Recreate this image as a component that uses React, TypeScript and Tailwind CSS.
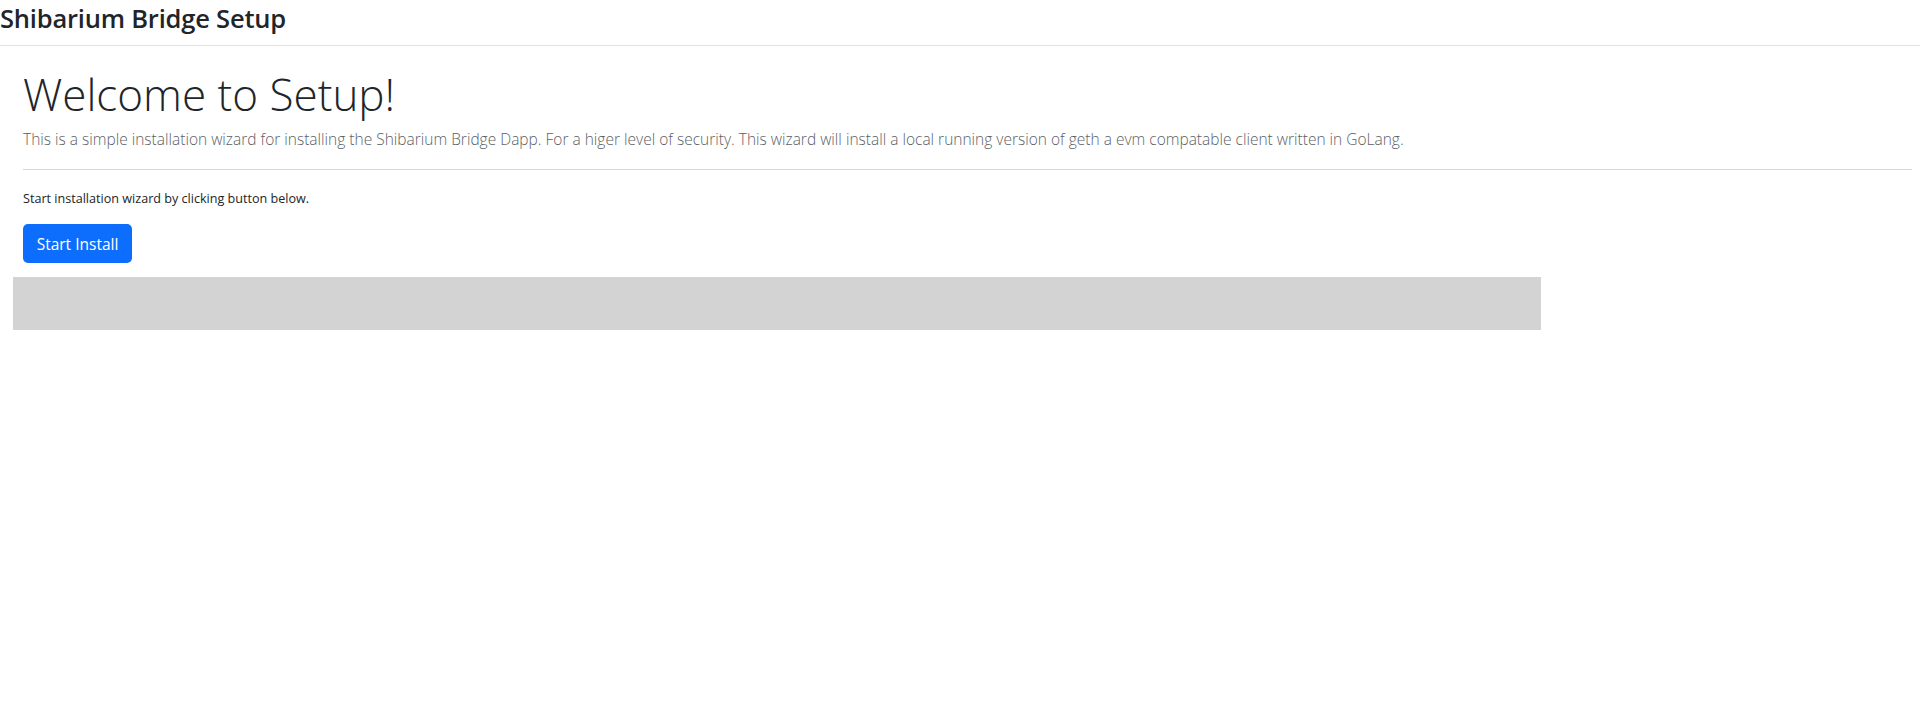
export default function App() {
  return (
    <div className="min-h-screen bg-white text-[#212529] font-['Open_Sans',sans-serif]">
      {/* top bar */}
      <header className="h-[46px] border-b border-[#dee2e6] flex items-start">
        <h1 className="text-[25.5px] font-semibold leading-[36px] tracking-[-0.2px]">Shibarium Bridge Setup</h1>
      </header>

      <main className="pl-[23px] pr-[8px] pt-[21px]">
        <h2 className="text-[44px] font-light leading-[54px]">Welcome to Setup!</h2>
        <p className="mt-[6px] text-[15.5px] font-light leading-[24px] text-[#5a5f66]">
          This is a simple installation wizard for installing the Shibarium Bridge Dapp. For a higer level of security. This wizard will install a local running version of geth a evm compatable client written in GoLang.
        </p>
        <hr className="mt-[18px] border-t border-[#d6d6d6]" />
        <p className="mt-[19px] text-[12.6px] leading-[20px]">Start installation wizard by clicking button below.</p>
        <button className="mt-[15px] h-[39px] w-[109px] rounded-[5px] bg-[#0d6efd] text-white text-[15.5px] leading-[24px]">
          Start Install
        </button>
      </main>

      <div className="ml-[13px] mt-[14px] w-[1528px] h-[53px] bg-[#d3d3d3]" />
    </div>
  );
}
